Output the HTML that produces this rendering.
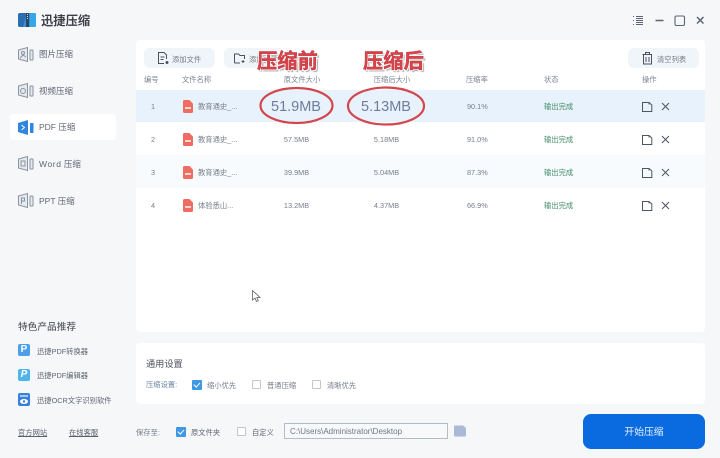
<!DOCTYPE html>
<html lang="zh-CN"><head><meta charset="utf-8"><title>迅捷压缩</title>
<style>
html,body{margin:0;padding:0}
body{width:720px;height:458px;overflow:hidden;background:#f6f7f9;position:relative;font-family:"Liberation Sans","Noto Sans CJK SC",sans-serif;color:#767d8c}
body>*{filter:blur(.3px)}
.a,.t{position:absolute}
.t{white-space:nowrap;font-size:7.3px;line-height:12px;transform:translateY(calc(-50% + 2px))}
.c{transform:translate(-50%,calc(-50% + 2px))}
.box{position:absolute;background:#fff;border-radius:4px}
svg{position:absolute;overflow:visible}
.cb{position:absolute;width:9px;height:9px;box-sizing:border-box;border:1px solid #c3c7cd;background:#fff;border-radius:1px}
.cb.on{background:#3f97e6;border:0;width:10px;height:10px}
.cb.on:after{content:"";position:absolute;left:3.2px;top:1.2px;width:2.5px;height:4.8px;border:solid #fff;border-width:0 1.4px 1.4px 0;transform:rotate(42deg)}
.pdf{position:absolute;left:183px;width:10px;height:13px;background:#ef6c62;border-radius:1.5px;clip-path:polygon(0 0,65% 0,100% 28%,100% 100%,0 100%)}
.pdf:after{content:"";position:absolute;left:2px;top:7px;width:6px;height:2px;background:#fbd5d1}
.nav{color:#5f6572;font-size:8.5px}
.hd{color:#7d8492}
.g{color:#3f8a64}
</style></head><body>

<!-- logo -->
<svg style="left:18px;top:13px" width="18" height="15" viewBox="0 0 18 15"><rect width="18" height="14" rx="2" fill="#3a8fd6"/><path d="M0 2Q0 0 2 0H9L5 14H2Q0 14 0 12Z" fill="#2b6fb0"/><rect x="8" width="3" height="14" fill="#2a4560"/><path d="M9.5 1v6" stroke="#cfe4f5" stroke-width="1" stroke-dasharray="1 1"/><rect x="12" y="0" width="6" height="14" rx="1" fill="#36a7e6"/></svg>
<div class="t" style="left:41px;top:18.500px;font-size:12.3px;line-height:16px;font-weight:700;color:#3c3f46">迅捷压缩</div>

<!-- window controls -->
<svg style="left:632px;top:15px" width="12" height="11" fill="none" stroke="#5b6476" stroke-width="1"><path d="M1 1.500h1M1 5.500h1M1 9.500h1M4 1.500h7M4 3.500h7M4 5.500h7M4 7.500h7M4 9.500h7"/></svg>
<svg style="left:654px;top:15px" width="12" height="11" fill="none" stroke="#5b6476" stroke-width="1.500"><path d="M1.500 5.500h8"/></svg>
<svg style="left:674px;top:15px" width="12" height="11" fill="none" stroke="#5b6476" stroke-width="1.100"><rect x="1" y="1" width="9.500" height="9.500" rx="1.500"/></svg>
<svg style="left:695px;top:15px" width="12" height="11" fill="none" stroke="#5b6476" stroke-width="1.500"><path d="M2 2l6.500 6.500M8.500 2l-6.500 6.500"/></svg>

<!-- sidebar -->
<div class="a" style="left:10px;top:114px;width:106px;height:26px;background:#fff;border-radius:3px"></div>
<svg style="left:18px;top:47px" width="16" height="15" fill="none" stroke="#8b92a3" stroke-width="1"><path d="M.5 3L9.500 .5V14.500L.5 12Z" fill="#e6e9ee"/><rect x="12" y="3" width="3" height="10" rx=".5" fill="#e6e9ee"/><circle cx="5" cy="6" r="1.500"/><path d="M2 11l3-3 3 2"/></svg>
<div class="t nav" style="left:39px;top:52px">图片压缩</div>
<svg style="left:18px;top:83px" width="16" height="15" fill="none" stroke="#8b92a3" stroke-width="1"><path d="M.5 3L9.500 .5V14.500L.5 12Z" fill="#e6e9ee"/><rect x="12" y="3" width="3" height="10" rx=".5" fill="#e6e9ee"/><circle cx="5" cy="8" r="2.500"/></svg>
<div class="t nav" style="left:39px;top:89px">视频压缩</div>
<svg style="left:18px;top:120px" width="16" height="15"><path d="M0 3L10 0V15L0 12Z" fill="#2f86de"/><rect x="12" y="3" width="3.500" height="10" rx=".5" fill="#2f86de"/><path d="M3.500 5l3 2.500-3 2.500" fill="none" stroke="#fff" stroke-width="1"/></svg>
<div class="t nav" style="left:39px;top:125px">PDF 压缩</div>
<svg style="left:18px;top:156px" width="16" height="15" fill="none" stroke="#8b92a3" stroke-width="1"><path d="M.5 3L9.500 .5V14.500L.5 12Z" fill="#e6e9ee"/><rect x="12" y="3" width="3" height="10" rx=".5" fill="#e6e9ee"/><rect x="3" y="5" width="4" height="5"/></svg>
<div class="t nav" style="left:39px;top:162px"><span style="letter-spacing:.6px">Word</span> 压缩</div>
<svg style="left:18px;top:193px" width="16" height="15" fill="none" stroke="#8b92a3" stroke-width="1"><path d="M.5 3L9.500 .5V14.500L.5 12Z" fill="#e6e9ee"/><rect x="12" y="3" width="3" height="10" rx=".5" fill="#e6e9ee"/><path d="M3.500 11V5h3v3h-3"/></svg>
<div class="t nav" style="left:39px;top:199px">PPT 压缩</div>

<div class="t" style="left:18px;top:326px;font-size:9.700px;line-height:14px;color:#3f434c">特色产品推荐</div>
<div class="a" style="left:18px;top:344px;width:12px;height:12px;background:#4c9fe8;border-radius:2px;color:#fff;font:700 10px/12px 'Liberation Sans';text-align:center">P</div>
<div class="t" style="left:37px;top:350px;color:#5f6572">迅捷PDF转换器</div>
<div class="a" style="left:18px;top:369px;width:12px;height:12px;background:#4fb4ea;border-radius:2px;color:#fff;font:italic 700 10px/12px 'Liberation Sans';text-align:center">P</div>
<div class="t" style="left:37px;top:374px;color:#5f6572">迅捷PDF编辑器</div>
<svg style="left:18px;top:393px" width="12" height="13"><rect width="12" height="13" rx="2" fill="#3a7fdd"/><rect x="2" y="2" width="8" height="2" fill="#a9cbf3"/><ellipse cx="6" cy="8.500" rx="4" ry="2.500" fill="#fff"/><circle cx="6" cy="8.500" r="1.200" fill="#3a7fdd"/></svg>
<div class="t" style="left:37px;top:399px;color:#5f6572">迅捷OCR文字识别软件</div>
<div class="t" style="left:18px;top:431px;color:#5a606c;text-decoration:underline">官方网站</div>
<div class="t" style="left:69px;top:431px;color:#5a606c;text-decoration:underline">在线客服</div>

<!-- main panel -->
<div class="box" style="left:136px;top:40px;width:569px;height:292px"></div>
<div class="a" style="left:136px;top:90px;width:569px;height:32px;background:#e8f2fc"></div>
<div class="a" style="left:136px;top:155px;width:569px;height:33px;background:#f8fbfe"></div>

<div class="a" style="left:144px;top:48px;width:71px;height:20px;background:#f0f5f9;border-radius:6px"></div>
<svg style="left:157px;top:52px" width="12" height="13" fill="none" stroke="#4a5160" stroke-width="1"><path d="M9.500 7V3L7 .5H1.500V11.500H7"/><path d="M3.500 5h4M3.500 7.500h3"/><circle cx="10" cy="10.500" r="1" fill="#4a5160"/></svg>
<div class="t" style="left:172px;top:58px">添加文件</div>
<div class="a" style="left:224px;top:48px;width:60px;height:20px;background:#f0f5f9;border-radius:6px"></div>
<svg style="left:234px;top:53px" width="12" height="11" fill="none" stroke="#4a5160" stroke-width="1"><path d="M.5 10V1H4.500L6 2.500H10.500V6M.5 10H6"/><path d="M9 7v3M7.500 8.500h3"/></svg>
<div class="t" style="left:249px;top:58px">添加文件夹</div>
<div class="a" style="left:628px;top:48px;width:71px;height:20px;background:#f0f5f9;border-radius:6px"></div>
<svg style="left:642px;top:52px" width="11" height="13" fill="none" stroke="#4a5160" stroke-width="1"><path d="M.5 2.500h9.500M3.500 2.500V.5h4V2.500M1.500 2.500V12h8V2.500M4 5v5M7 5v5"/></svg>
<div class="t" style="left:657px;top:58px">清空列表</div>

<!-- header -->
<div class="t hd" style="left:144px;top:78px">编号</div>
<div class="t hd" style="left:182px;top:78px">文件名称</div>
<div class="t hd c" style="left:302px;top:78px">原文件大小</div>
<div class="t hd c" style="left:392px;top:78px">压缩后大小</div>
<div class="t hd" style="left:466px;top:78px">压缩率</div>
<div class="t hd" style="left:544px;top:78px">状态</div>
<div class="t hd" style="left:642px;top:78px">操作</div>

<!-- row 1 -->
<div class="t" style="left:151px;top:105px">1</div>
<div class="pdf" style="top:100px"></div>
<div class="t" style="left:198px;top:105px">教育通史_...</div>
<div class="t c" style="left:296px;top:105px;font-size:14.500px;line-height:18px;color:#6e7d99">51.9MB</div>
<div class="t c" style="left:386px;top:105px;font-size:14.500px;line-height:18px;color:#6e7d99">5.13MB</div>
<div class="t" style="left:467px;top:105px">90.1%</div>
<div class="t g" style="left:544px;top:105px">输出完成</div>

<!-- row 2 -->
<div class="t" style="left:151px;top:138px">2</div>
<div class="pdf" style="top:133px"></div>
<div class="t" style="left:198px;top:138px">教育通史_...</div>
<div class="t c" style="left:296.500px;top:138px">57.5MB</div>
<div class="t c" style="left:386.500px;top:138px">5.18MB</div>
<div class="t" style="left:467px;top:138px">91.0%</div>
<div class="t g" style="left:544px;top:138px">输出完成</div>

<!-- row 3 -->
<div class="t" style="left:151px;top:171px">3</div>
<div class="pdf" style="top:166px"></div>
<div class="t" style="left:198px;top:171px">教育通史_...</div>
<div class="t c" style="left:296.500px;top:171px">39.9MB</div>
<div class="t c" style="left:386.500px;top:171px">5.04MB</div>
<div class="t" style="left:467px;top:171px">87.3%</div>
<div class="t g" style="left:544px;top:171px">输出完成</div>

<!-- row 4 -->
<div class="t" style="left:151px;top:204px">4</div>
<div class="pdf" style="top:199px"></div>
<div class="t" style="left:198px;top:204px">体验悉山...</div>
<div class="t c" style="left:296.500px;top:204px">13.2MB</div>
<div class="t c" style="left:386.500px;top:204px">4.37MB</div>
<div class="t" style="left:467px;top:204px">66.9%</div>
<div class="t g" style="left:544px;top:204px">输出完成</div>

<!-- row actions -->
<svg style="left:642px;top:101px" width="32" height="120" fill="none" stroke="#4d5462" stroke-width="1">
<g><path d="M.5 10.500V1.500H7L9.800 4V10.500Z"/><path d="M7 1.500V3.500"/><path d="M20 2l7 7M27 2l-7 7"/></g>
<g transform="translate(0 33)"><path d="M.5 10.500V1.500H7L9.800 4V10.500Z"/><path d="M7 1.500V3.500"/><path d="M20 2l7 7M27 2l-7 7"/></g>
<g transform="translate(0 66)"><path d="M.5 10.500V1.500H7L9.800 4V10.500Z"/><path d="M7 1.500V3.500"/><path d="M20 2l7 7M27 2l-7 7"/></g>
<g transform="translate(0 99)"><path d="M.5 10.500V1.500H7L9.800 4V10.500Z"/><path d="M7 1.500V3.500"/><path d="M20 2l7 7M27 2l-7 7"/></g>
</svg>

<!-- annotations -->
<svg style="left:258px;top:87px" width="170" height="40" fill="none" stroke="#d2474c" stroke-width="2.200"><ellipse cx="38.500" cy="18.500" rx="36" ry="17.500"/><ellipse cx="128" cy="19" rx="38" ry="18.500"/></svg>
<div class="t" style="left:257px;top:60px;font-size:20.300px;line-height:24px;font-weight:700;color:#d9434a;-webkit-text-stroke:.4px #b93038;text-shadow:1px 1px 0 #fff,-1px -1px 0 #fff,1px -1px 0 #fff,-1px 1px 0 #fff,2px 2px 1px #a9a9a9">压缩前</div>
<div class="t" style="left:363px;top:60px;font-size:20.300px;line-height:24px;font-weight:700;color:#d9434a;-webkit-text-stroke:.4px #b93038;text-shadow:1px 1px 0 #fff,-1px -1px 0 #fff,1px -1px 0 #fff,-1px 1px 0 #fff,2px 2px 1px #a9a9a9">压缩后</div>

<!-- cursor -->
<svg style="left:252px;top:290px" width="10" height="13" fill="#fff" stroke="#5c6069" stroke-width=".8"><path d="M.5 .5V10L3 8l1.500 3.500 1.800-.8L4.800 7.500H8Z"/></svg>

<!-- settings -->
<div class="box" style="left:136px;top:343px;width:569px;height:61px"></div>
<div class="t" style="left:146px;top:362px;font-size:9.200px;color:#4a4f5a">通用设置</div>
<div class="t" style="left:146px;top:383px;color:#6f87a8">压缩设置:</div>
<div class="cb on" style="left:192px;top:380px"></div>
<div class="t" style="left:207px;top:384px">缩小优先</div>
<div class="cb" style="left:252px;top:380px"></div>
<div class="t" style="left:267px;top:384px">普通压缩</div>
<div class="cb" style="left:312px;top:380px"></div>
<div class="t" style="left:327px;top:384px">清晰优先</div>

<!-- bottom -->
<div class="t" style="left:136px;top:431px">保存至:</div>
<div class="cb on" style="left:176px;top:427px"></div>
<div class="t" style="left:191px;top:431px;color:#5f6572">原文件夹</div>
<div class="cb" style="left:237px;top:427px"></div>
<div class="t" style="left:252px;top:431px;color:#5f6572">自定义</div>
<div class="a" style="left:284px;top:423px;width:164px;height:16px;box-sizing:border-box;border:1px solid #b4bcc8;background:#f8f9fa;padding-left:5px;font-size:8px;line-height:15px;color:#6f7686">C:\Users\Administrator\Desktop</div>
<svg style="left:454px;top:425px" width="13" height="12"><path d="M0 1.500Q0 .5 1 .5H9L12 3V10.500Q12 11.500 11 11.500H1Q0 11.500 0 10.500Z" fill="#a9b9d8"/></svg>
<div class="a" style="left:583px;top:414px;width:122px;height:35px;background:#0a6be0;border-radius:8px;color:#e6f0fc;font-size:9.800px;line-height:37px;text-align:center">开始压缩</div>

</body></html>
